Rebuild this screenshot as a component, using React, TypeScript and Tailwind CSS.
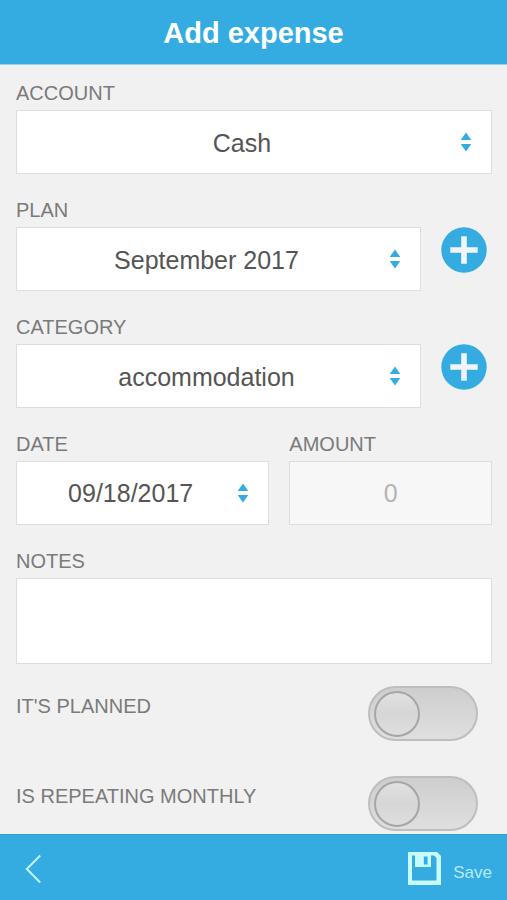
import { useState } from "react";
import type { ReactNode } from "react";
import clsx from "clsx";

const boxClass = "block w-full h-16 border border-[#dedede] rounded-none text-[25px] text-center outline-none"
const pickClass = "appearance-none bg-white text-[#555555] pl-4 pr-10 [text-align-last:center]"

function FieldLabel({ htmlFor, children }: { htmlFor: string, children: ReactNode }) {
    return (
        <label htmlFor={htmlFor} className="block h-6 mb-[5px] text-[20px] leading-6 text-[#7a7a7a]">
            {children}
        </label>
    )
}

function Arrows() {
    return (
        <svg className="absolute right-5 inset-y-0 my-auto w-3 h-5 pointer-events-none fill-[#34ace1]" viewBox="0 0 12 20">
            <path d="M6 0.5 L11.3 8 H0.7 Z" />
            <path d="M6 19.5 L11.3 12 H0.7 Z" />
        </svg>
    )
}

function SelectField({ id, options }: { id: string, options: string[] }) {
    return (
        <div className="relative flex-1">
            <select id={id} className={clsx(boxClass, pickClass, "pt-1")}>
                {options.map((o) => (
                    <option key={o}>{o}</option>
                ))}
            </select>
            <Arrows />
        </div>
    )
}

function AddButton({ label }: { label: string }) {
    return (
        <button type="button" aria-label={label} className="ml-5 mr-[5px] size-[46px] flex-none self-start">
            <svg viewBox="0 0 46 46" className="size-full">
                <circle cx="23" cy="23" r="22.7" fill="#34ace1" />
                <path d="M23 9.3 V36.7 M9.3 23 H36.7" stroke="#f1f5f7" strokeWidth="5.6" />
            </svg>
        </button>
    )
}

function Toggle({ id, label }: { id: string, label: string }) {
    const [on, setOn] = useState(false);

    return (
        <div className="flex justify-between items-start pr-3.5">
            <label htmlFor={id} className="text-[20px] leading-10 text-[#7a7a7a]">{label}</label>
            <input
                id={id}
                type="checkbox"
                role="switch"
                checked={on}
                onChange={(e) => setOn(e.target.checked)}
                className="appearance-none flex items-center w-[110px] h-[55px] px-1 flex-none rounded-full border-2 border-[#bebebe] bg-linear-to-b from-[#cecece] to-[#dfdfdf] checked:justify-end checked:from-[#34ace1] checked:to-[#5cc0ec] before:block before:size-[46px] before:rounded-full before:border-2 before:border-[#a6a6a6] before:bg-linear-to-b before:from-[#e0e0e0] before:via-[#d6d6d6] before:to-[#dedede]"
            />
        </div>
    )
}

export default function App() {
    const [date, setDate] = useState("09/18/2017");

    return (
        <div className="min-h-screen flex flex-col bg-[#f1f1f1] font-['Liberation_Sans',Arial,sans-serif]">
            <header className="h-[65px] pt-1 flex-none flex items-center justify-center bg-[#34ace1] border-b border-[#8ed6f3]">
                <h1 className="text-[29px] font-bold text-white">Add expense</h1>
            </header>

            <main className="flex-1 pl-4 pr-[15px] pt-4 pb-[3px]">
                <form id="expense">
                    <div className="flex flex-col gap-6">
                        <div>
                            <FieldLabel htmlFor="account">ACCOUNT</FieldLabel>
                            <div className="flex">
                                <SelectField id="account" options={["Cash"]} />
                            </div>
                        </div>

                        <div>
                            <FieldLabel htmlFor="plan">PLAN</FieldLabel>
                            <div className="flex">
                                <SelectField id="plan" options={["September 2017"]} />
                                <AddButton label="Add plan" />
                            </div>
                        </div>

                        <div>
                            <FieldLabel htmlFor="category">CATEGORY</FieldLabel>
                            <div className="flex">
                                <SelectField id="category" options={["accommodation"]} />
                                <AddButton label="Add category" />
                            </div>
                        </div>

                        <div className="grid grid-cols-[5fr_4fr] gap-5">
                            <div>
                                <FieldLabel htmlFor="date">DATE</FieldLabel>
                                <div className="relative">
                                    <input
                                        id="date"
                                        type="text"
                                        value={date}
                                        onChange={(e) => setDate(e.target.value)}
                                        className={clsx(boxClass, pickClass)}
                                    />
                                    <Arrows />
                                </div>
                            </div>
                            <div>
                                <FieldLabel htmlFor="amount">AMOUNT</FieldLabel>
                                <input
                                    id="amount"
                                    type="text"
                                    inputMode="decimal"
                                    placeholder="0"
                                    className={clsx(boxClass, "bg-[#f7f7f7] text-[#555555] placeholder:text-[#b4b4b4]")}
                                />
                            </div>
                        </div>

                        <div>
                            <FieldLabel htmlFor="notes">NOTES</FieldLabel>
                            <textarea
                                id="notes"
                                className="block w-full h-[86px] p-3 resize-none bg-white border border-[#dedede] text-[25px] text-[#555555] outline-none"
                            />
                        </div>
                    </div>

                    <div className="mt-[22px] flex flex-col gap-[35px]">
                        <Toggle id="planned" label="IT'S PLANNED" />
                        <Toggle id="monthly" label="IS REPEATING MONTHLY" />
                    </div>
                </form>
            </main>

            <footer className="sticky bottom-0 h-[66px] pt-0.5 flex-none flex items-center justify-between pl-6 pr-[15px] bg-[#34ace1] border-t border-[#2d9fd3]">
                <button type="button" aria-label="Back">
                    <svg className="w-5 h-8" viewBox="0 0 20 32" fill="none" stroke="#c4f4fd" strokeWidth="2">
                        <path d="M16.2 2.5 L2.8 16 L16.2 29.5" />
                    </svg>
                </button>
                <button type="submit" form="expense" className="flex items-end gap-3 text-[17px] leading-6 text-[#b5ebfb]">
                    <svg className="size-[33px]" viewBox="0 0 33 33" fill="#c8fbff">
                        <path fillRule="evenodd" d="M0 0 H29 L33 4 V33 H0 Z M4 3.5 V28.5 H28.5 V6 L26 3.5 Z" />
                        <path fillRule="evenodd" d="M7 3 H23 V15 H7 Z M15.8 4.5 V12.5 H19.6 V4.5 Z" />
                    </svg>
                    Save
                </button>
            </footer>
        </div>
    )
}
